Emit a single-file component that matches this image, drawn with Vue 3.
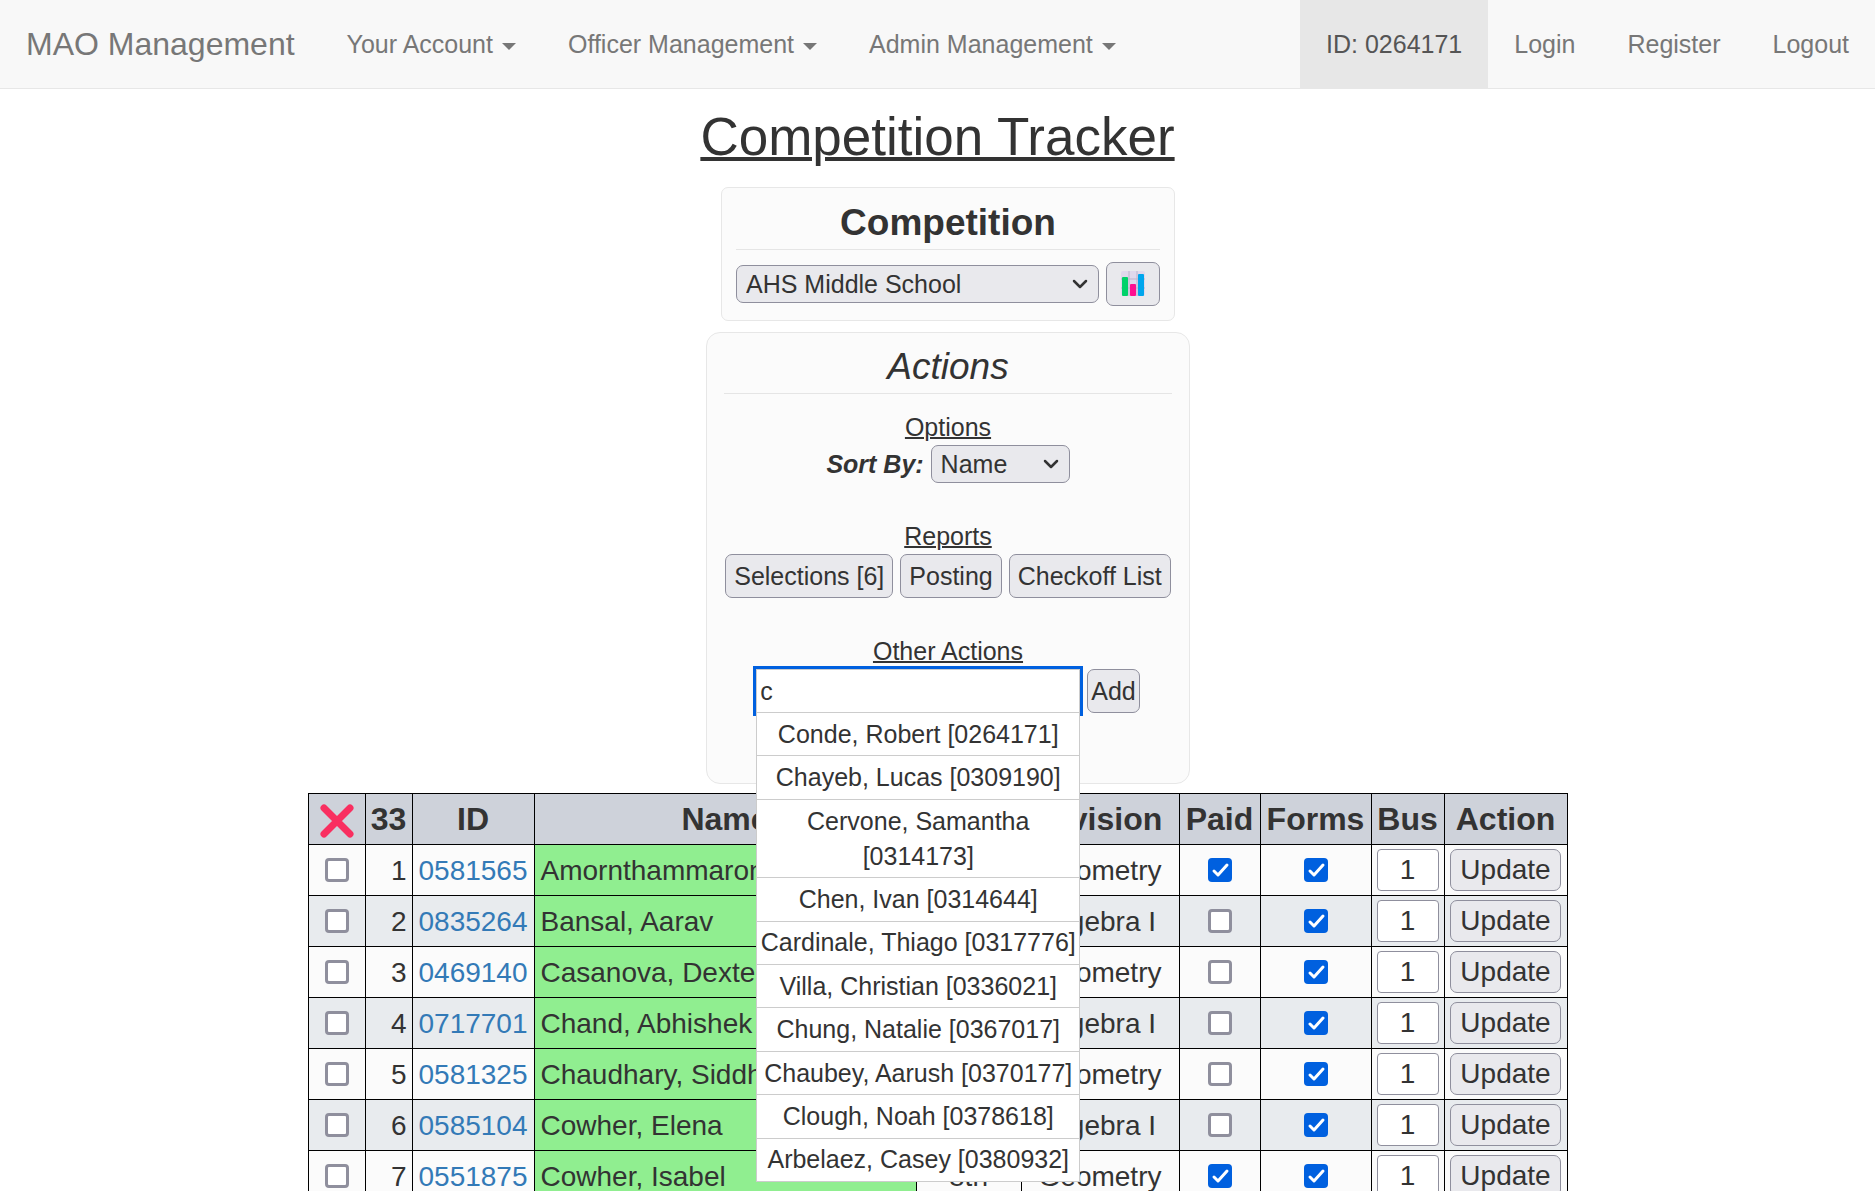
<script setup>
import { ref } from 'vue'

const menus = ['Your Account', 'Officer Management', 'Admin Management']
const account = ['Login', 'Register', 'Logout']
const query = ref('c')
const competition = ref('AHS Middle School')
const sortBy = ref('Name')

const suggestions = [
  'Conde, Robert [0264171]',
  'Chayeb, Lucas [0309190]',
  'Cervone, Samantha [0314173]',
  'Chen, Ivan [0314644]',
  'Cardinale, Thiago [0317776]',
  'Villa, Christian [0336021]',
  'Chung, Natalie [0367017]',
  'Chaubey, Aarush [0370177]',
  'Clough, Noah [0378618]',
  'Arbelaez, Casey [0380932]',
]

const students = ref([
  { id: '0581565', name: 'Amornthammarong', grade: '8th', division: 'Geometry', paid: true, forms: true, bus: '1', picked: false },
  { id: '0835264', name: 'Bansal, Aarav', grade: '7th', division: 'Algebra I', paid: false, forms: true, bus: '1', picked: false },
  { id: '0469140', name: 'Casanova, Dexter', grade: '8th', division: 'Geometry', paid: false, forms: true, bus: '1', picked: false },
  { id: '0717701', name: 'Chand, Abhishek', grade: '7th', division: 'Algebra I', paid: false, forms: true, bus: '1', picked: false },
  { id: '0581325', name: 'Chaudhary, Siddh', grade: '8th', division: 'Geometry', paid: false, forms: true, bus: '1', picked: false },
  { id: '0585104', name: 'Cowher, Elena', grade: '7th', division: 'Algebra I', paid: false, forms: true, bus: '1', picked: false },
  { id: '0551875', name: 'Cowher, Isabel', grade: '8th', division: 'Geometry', paid: true, forms: true, bus: '1', picked: false },
])
</script>

<template>
  <div class="page">
    <nav class="navbar">
      <a class="brand" href="#">MAO Management</a>
      <a v-for="menu in menus" :key="menu" class="nav-link" href="#">{{ menu }}<span class="caret"></span></a>
      <div class="nav-right">
        <a class="nav-link active" href="#">ID: 0264171</a>
        <a v-for="item in account" :key="item" class="nav-link" href="#">{{ item }}</a>
      </div>
    </nav>

    <h1 class="title">Competition Tracker</h1>

    <div class="panels">
      <section class="panel competition">
        <h2><label for="competition">Competition</label></h2>
        <div class="row">
          <select id="competition" v-model="competition" class="wide">
            <option>AHS Middle School</option>
          </select>
          <button type="button" class="chart" aria-label="Statistics">
            <svg width="26" height="26" viewBox="0 0 26 26" aria-hidden="true">
              <rect x="1" y="0" width="24" height="25" rx="2" fill="#e0d8ec" />
              <path d="M9 0v25M17 0v25M1 8h24M1 17h24" stroke="#bcb4cc" fill="none" />
              <rect x="2" y="6" width="6" height="19" rx="1" fill="#00d26a" />
              <rect x="10" y="13" width="6" height="12" rx="1" fill="#ff0f91" />
              <rect x="18" y="3" width="6" height="22" rx="1" fill="#00a6ed" />
            </svg>
          </button>
        </div>
      </section>

      <section class="panel actions">
        <h2>Actions</h2>
        <h3>Options</h3>
        <div class="row sort">
          <label for="sort">Sort By:</label>
          <select id="sort" v-model="sortBy">
            <option>Name</option>
          </select>
        </div>
        <h3>Reports</h3>
        <div class="row">
          <button type="button">Selections [6]</button>
          <button type="button">Posting</button>
          <button type="button">Checkoff List</button>
        </div>
        <h3><label for="student">Other Actions</label></h3>
        <div class="row">
          <div class="search">
            <input id="student" v-model="query" type="text" autocomplete="off" />
            <ul class="menu">
              <li v-for="s in suggestions" :key="s">{{ s }}</li>
            </ul>
          </div>
          <button type="button" class="add">Add</button>
        </div>
      </section>
    </div>

    <table class="tracker">
      <colgroup>
        <col class="c-pick" /><col class="c-num" /><col class="c-id" /><col class="c-name" /><col class="c-grade" />
        <col class="c-division" /><col class="c-paid" /><col class="c-forms" /><col class="c-bus" /><col class="c-action" />
      </colgroup>
      <thead>
        <tr>
          <th aria-label="Remove">
            <svg class="cross" width="34" height="34" viewBox="0 0 34 34" aria-hidden="true">
              <path d="M4 4L30 30M30 4L4 30" stroke="#f92f60" stroke-width="7" stroke-linecap="round" />
            </svg>
          </th>
          <th>33</th>
          <th>ID</th>
          <th>Name</th>
          <th>Grade</th>
          <th>Division</th>
          <th>Paid</th>
          <th>Forms</th>
          <th>Bus</th>
          <th>Action</th>
        </tr>
      </thead>
      <tbody>
        <tr v-for="(s, i) in students" :key="s.id">
          <td><input v-model="s.picked" type="checkbox" :aria-label="'Select ' + s.name" /></td>
          <td class="num">{{ i + 1 }}</td>
          <td><a href="#">{{ s.id }}</a></td>
          <td class="name">{{ s.name }}</td>
          <td>{{ s.grade }}</td>
          <td>{{ s.division }}</td>
          <td><input v-model="s.paid" type="checkbox" :aria-label="'Paid, ' + s.name" /></td>
          <td><input v-model="s.forms" type="checkbox" :aria-label="'Forms, ' + s.name" /></td>
          <td><input v-model="s.bus" type="text" class="bus" :aria-label="'Bus, ' + s.name" /></td>
          <td><button type="button" class="update">Update</button></td>
        </tr>
      </tbody>
    </table>
  </div>
</template>

<style>
body {
  margin: 0;
  background: #fff;
}
</style>

<style scoped>
.page {
  font-family: "Liberation Sans", Arial, sans-serif;
  font-size: 25px;
  line-height: 35px;
  color: #333;
}
.page * {
  box-sizing: border-box;
}
.navbar {
  display: flex;
  height: 89px;
  background: #f8f8f8;
  border-bottom: 1px solid #e7e7e7;
}
.brand,
.nav-link {
  display: flex;
  align-items: center;
  padding: 0 26px;
  color: #777;
  text-decoration: none;
  white-space: nowrap;
}
.brand {
  font-size: 32px;
}
.nav-right {
  display: flex;
  margin-left: auto;
}
.active {
  background: #e7e7e7;
  color: #555;
}
.caret {
  margin: 4px 0 0 9px;
  border-top: 7px solid currentColor;
  border-left: 7px solid transparent;
  border-right: 7px solid transparent;
}
.title {
  margin: 19px 0 21px;
  font-size: 53px;
  line-height: 58px;
  font-weight: 400;
  text-align: center;
  text-decoration: underline;
  text-decoration-thickness: 4px;
}
.panels {
  display: flex;
  flex-direction: column;
  align-items: center;
  gap: 11px;
  padding-left: 21px;
}
.panel {
  background: #fbfbfb;
  border: 1px solid #e7e7e7;
  text-align: center;
}
.competition {
  padding: 15px 14px 14px;
  border-radius: 7px;
}
.actions {
  min-width: 484px;
  padding: 14px 17px 70px;
  border-radius: 14px;
}
h2 {
  margin: 0;
  padding-bottom: 6px;
  border-bottom: 1px solid #e5e5e5;
  font-size: 37px;
  line-height: 40px;
}
.competition h2 {
  margin-bottom: 12px;
}
.actions h2 {
  margin-bottom: 16px;
  font-weight: 400;
  font-style: italic;
}
h3 {
  margin: 0;
  font-size: 25px;
  line-height: 35px;
  font-weight: 400;
  text-decoration: underline;
  text-decoration-thickness: 2px;
}
.row + h3 {
  margin-top: 36px;
}
.row {
  display: flex;
  align-items: center;
  justify-content: center;
  gap: 7px;
}
.sort label {
  font-weight: 700;
  font-style: italic;
}
button,
select {
  margin: 0;
  border: 1px solid #8f8f9d;
  border-radius: 7px;
  background-color: #e9e9ed;
  color: #333;
  font-family: inherit;
  font-size: 25px;
}
button {
  height: 44px;
  padding: 0 8px;
}
select {
  appearance: none;
  width: 139px;
  height: 38px;
  padding: 0 9px;
  background-image: url("data:image/svg+xml,%3Csvg xmlns='http://www.w3.org/2000/svg' width='16' height='10' viewBox='0 0 16 10'%3E%3Cpath d='M2 2l6 6 6-6' fill='none' stroke='%23333' stroke-width='2.500' stroke-linecap='round' stroke-linejoin='round'/%3E%3C/svg%3E");
  background-repeat: no-repeat;
  background-position: right 10px center;
}
.wide {
  width: 363px;
}
.chart {
  display: flex;
  align-items: center;
  justify-content: center;
  width: 54px;
}
.search {
  position: relative;
  width: 324px;
}
.search input {
  display: block;
  width: 100%;
  height: 44px;
  padding: 0 3px;
  border: 1px solid #ccc;
  border-radius: 0;
  outline: 3px solid #0060df;
  background: #fff;
  color: #333;
  font-family: inherit;
  font-size: 25px;
}
.menu {
  position: absolute;
  top: 43px;
  left: 0;
  right: 0;
  z-index: 1;
  display: flex;
  flex-direction: column;
  min-height: 470px;
  margin: 0;
  padding: 0;
  border: 1px solid #ccc;
  background: #fff;
  list-style: none;
}
.menu li {
  display: flex;
  flex: 1 0 auto;
  align-items: center;
  justify-content: center;
  padding: 3px;
}
.menu li + li {
  border-top: 1px solid #ccc;
}
.add {
  padding: 0 3px;
}
.tracker {
  margin: 9px auto 0;
  table-layout: fixed;
  width: 1259px;
  border-collapse: collapse;
  font-size: 28px;
  text-align: center;
}
.c-pick { width: 57px; }
.c-num { width: 47px; }
.c-id { width: 122px; }
.c-name { width: 382px; }
.c-grade { width: 105px; }
.c-division { width: 158px; }
.c-paid { width: 81px; }
.c-forms { width: 111px; }
.c-bus { width: 73px; }
.c-action { width: 123px; }
th,
td {
  height: 51px;
  padding: 0;
  border: 1px solid #000;
  white-space: nowrap;
}
th {
  background: #ced2da;
  font-size: 32px;
}
td {
  background: #fbfbfb;
}
tbody tr:nth-child(even) td {
  background: #e8ebee;
}
tbody tr .name,
tbody tr:nth-child(even) .name {
  padding-left: 6px;
  background: #90ee90;
  text-align: left;
}
.num {
  padding-right: 5px;
  text-align: right;
}
td a {
  color: #337ab7;
  text-decoration: none;
}
.cross {
  display: block;
  margin: 4px auto 0;
}
input[type="checkbox"] {
  appearance: none;
  display: block;
  width: 24px;
  height: 24px;
  margin: 0 auto;
  border: 3px solid #8f8f9d;
  border-radius: 4px;
  background: #fff;
}
input[type="checkbox"]:checked {
  border: 0;
  background: #0060df url("data:image/svg+xml,%3Csvg xmlns='http://www.w3.org/2000/svg' viewBox='0 0 24 24'%3E%3Cpath d='M6 13l4 4L19 7' fill='none' stroke='%23fff' stroke-width='3' stroke-linecap='round' stroke-linejoin='round'/%3E%3C/svg%3E");
}
.bus {
  display: block;
  width: 62px;
  height: 42px;
  margin: 0 auto;
  padding: 0;
  border: 1px solid #8f8f9d;
  border-radius: 4px;
  background: #fff;
  color: #333;
  font-family: inherit;
  font-size: 28px;
  text-align: center;
}
.update {
  height: 42px;
  padding: 0 9px;
  font-size: 28px;
}
td button {
  display: block;
  margin: 0 auto;
}
</style>
